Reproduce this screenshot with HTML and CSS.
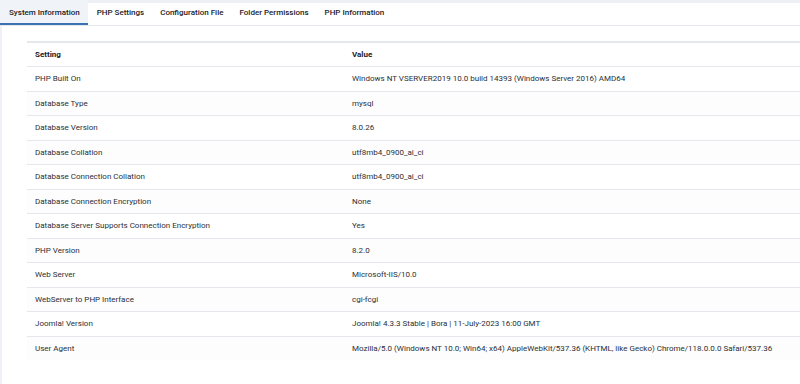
FILE: index.html
```html
<!DOCTYPE html>
<html lang="en">
<head>
    <meta charset="UTF-8">
    <meta name="viewport" content="width=device-width, initial-scale=1.0">
    <title>System Information</title>
    <link rel="stylesheet" href="styles.css">
</head>
<body>
    <div class="page">
        <ul class="tabs">
            <li class="tab active">System Information</li>
            <li class="tab">PHP Settings</li>
            <li class="tab">Configuration File</li>
            <li class="tab">Folder Permissions</li>
            <li class="tab">PHP Information</li>
        </ul>

        <div class="tab-pane">
            <table class="info-table">
                <thead>
                    <tr>
                        <th class="col-setting">Setting</th>
                        <th>Value</th>
                    </tr>
                </thead>
                <tbody>
                    <tr><td>PHP Built On</td><td>Windows NT VSERVER2019 10.0 build 14393 (Windows Server 2016) AMD64</td></tr>
                    <tr><td>Database Type</td><td>mysql</td></tr>
                    <tr><td>Database Version</td><td>8.0.26</td></tr>
                    <tr><td>Database Collation</td><td>utf8mb4_0900_ai_ci</td></tr>
                    <tr><td>Database Connection Collation</td><td>utf8mb4_0900_ai_ci</td></tr>
                    <tr><td>Database Connection Encryption</td><td>None</td></tr>
                    <tr><td>Database Server Supports Connection Encryption</td><td>Yes</td></tr>
                    <tr><td>PHP Version</td><td>8.2.0</td></tr>
                    <tr><td>Web Server</td><td>Microsoft-IIS/10.0</td></tr>
                    <tr><td>WebServer to PHP Interface</td><td>cgi-fcgi</td></tr>
                    <tr><td>Joomla! Version</td><td>Joomla! 4.3.3 Stable | Bora | 11-July-2023 16:00 GMT</td></tr>
                    <tr><td>User Agent</td><td>Mozilla/5.0 (Windows NT 10.0; Win64; x64) AppleWebKit/537.36 (KHTML, like Gecko) Chrome/118.0.0.0 Safari/537.36</td></tr>
                </tbody>
            </table>
        </div>
    </div>
</body>
</html>
```

FILE: styles.css
```css
body {
    margin: 0;
    font-family: Roboto, "Liberation Sans", Arial, sans-serif;
    font-size: 8px;
    color: #22272d;
    background: #eef2f7;
}

.page {
    padding-left: 2px;
    height: 384px;
    overflow: hidden;
}

/* Tabs */
.tabs {
    display: flex;
    list-style: none;
    margin: 0 0 0 -2px;
    padding: 0;
    background: linear-gradient(#edf1f6 3px, #fff 3px);
    border-bottom: 1px solid #e3e7ec;
}

.tab {
    padding: 9px 7px 8px 9px;
    height: 8px;
    line-height: 8px;
    font-weight: 500;
    color: #1c2128;
    white-space: nowrap;
}

.tab.active {
    background: #f0f4f8;
    border-bottom: 2px solid #3a72b4;
    height: 6px;
    padding-right: 8px;
    padding-bottom: 8px;
}

/* Table */
.tab-pane {
    background: #fff;
    padding: 15px 0 40px 25px;
}

.info-table {
    width: calc(100% + 20px);
    border-collapse: collapse;
    border-top: 2px solid #e4e7eb;
}

.info-table th,
.info-table td {
    text-align: left;
    padding: 0 8px;
    white-space: nowrap;
    border-bottom: 1px solid #e4e7eb;
}

.info-table th {
    font-weight: 700;
    height: 22px;
    padding-bottom: 1px;
    color: #1c2128;
}

.info-table .col-setting {
    width: 301px;
}

.info-table td {
    height: 23.5px;
    color: #2a2f36;
}

.info-table tbody tr:nth-child(even) td {
    background: #fdfdfd;
}

.info-table tbody tr:last-child td {
    border-bottom: none;
}
```
